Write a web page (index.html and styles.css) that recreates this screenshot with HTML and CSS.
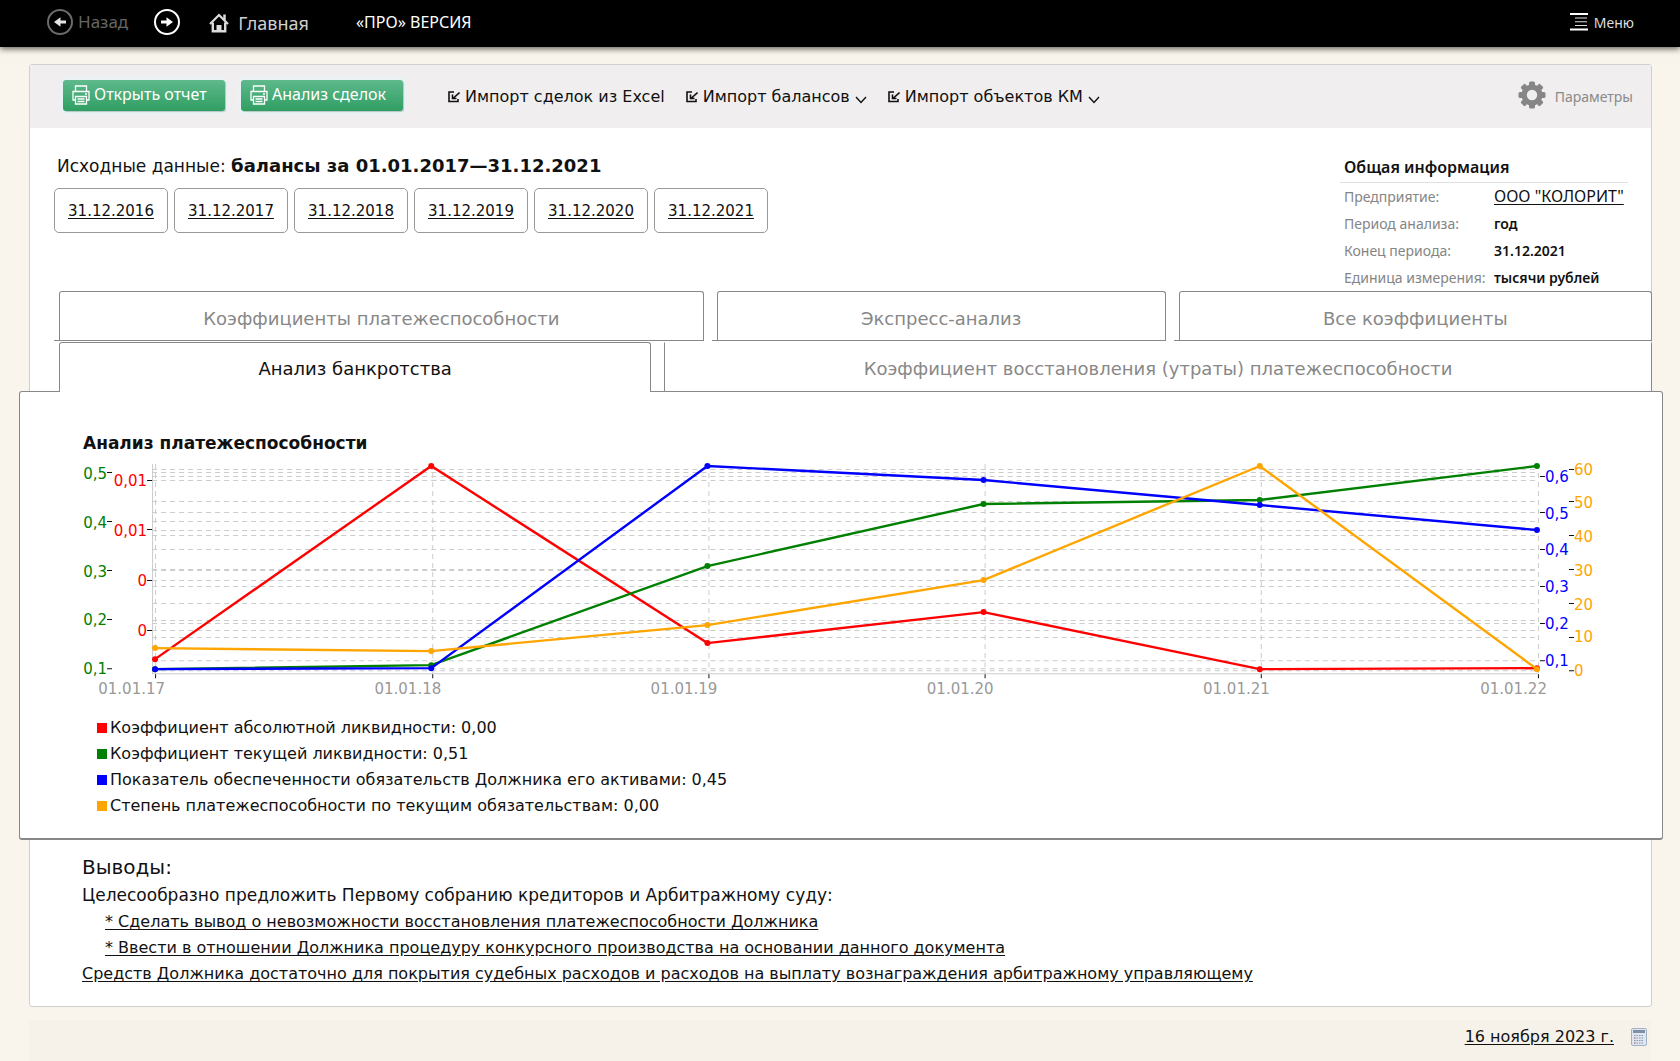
FILE: index.html
```html
<!DOCTYPE html>
<html lang="ru">
<head>
<meta charset="utf-8">
<title>Анализ банкротства</title>
<link rel="stylesheet" href="styles.css">
</head>
<body>
<header class="topbar">
  <nav class="topnav">
    <a class="nav-back" href="#">
      <svg width="26" height="26" viewBox="0 0 26 26"><circle cx="13" cy="13" r="12" fill="none" stroke="#6b6b6b" stroke-width="2"/><path d="M19 11.500h-5.500V8.200L7 13l6.500 4.800V14.500H19z" fill="#e4e4e4"/></svg>
      <span>Назад</span>
    </a>
    <a class="nav-next" href="#" aria-label="Вперёд">
      <svg width="26" height="26" viewBox="0 0 26 26"><circle cx="13" cy="13" r="12" fill="none" stroke="#fff" stroke-width="2"/><path d="M7 11.500h5.500V8.200L19 13l-6.500 4.800V14.500H7z" fill="#fff"/></svg>
    </a>
    <a class="nav-home" href="#">
      <svg width="20" height="20" viewBox="0 0 20 20" fill="none" stroke="#dcdcdc"><path d="M1 11L10 2l9 9" stroke-width="2.200"/><path d="M15.500 7V1.500" stroke-width="2.500"/><path d="M3.800 9.500v8.700h12.400V9.500" stroke-width="2.400"/><path d="M7.500 18v-6h5v6z" fill="#dcdcdc" stroke="none"/></svg>
      <span>Главная</span>
    </a>
    <a class="nav-pro" href="#">«ПРО» ВЕРСИЯ</a>
  </nav>
  <button class="menu" type="button">
    <svg width="18" height="18" viewBox="0 0 18 18" fill="#fff"><path d="M0 0h18v2H0zM0 15.500h18v2H0z"/><path d="M5 4.500h12v1H5zM5 8.200h12v1H5zM5 12h12v1H5z" fill="#ddd"/></svg>
    <span>Меню</span>
  </button>
</header>

<main class="card">
  <div class="toolbar">
    <button class="btn" type="button">
      <svg width="18" height="20" viewBox="0 0 18 20" fill="none" stroke="#fff" stroke-width="1.300"><path d="M3.500 6V1h11v5M3.500 15H1V6.500h16V15h-2.500M3.500 11.500h11V19h-11zM5.500 14h7M5.500 16.500h7M13 9h2"/></svg>
      <span>Открыть отчет</span>
    </button>
    <button class="btn" type="button">
      <svg width="18" height="20" viewBox="0 0 18 20" fill="none" stroke="#fff" stroke-width="1.300"><path d="M3.500 6V1h11v5M3.500 15H1V6.500h16V15h-2.500M3.500 11.500h11V19h-11zM5.500 14h7M5.500 16.500h7M13 9h2"/></svg>
      <span>Анализ сделок</span>
    </button>
    <div class="imports">
      <a href="#"><svg width="12" height="12" viewBox="0 0 12 12" fill="none" stroke="#111" stroke-width="1.600"><path d="M6 1H1v9.500h9V8M11.500 1.500L5.500 7M4.500 3.500v4h4"/></svg><span>Импорт сделок из Excel</span></a>
      <button type="button"><svg width="12" height="12" viewBox="0 0 12 12" fill="none" stroke="#111" stroke-width="1.600"><path d="M6 1H1v9.500h9V8M11.500 1.500L5.500 7M4.500 3.500v4h4"/></svg><span>Импорт балансов</span><svg class="chev" width="12" height="8" viewBox="0 0 12 8" fill="none" stroke="#111" stroke-width="1.400"><path d="M1 1l5 5.500L11 1"/></svg></button>
      <button type="button"><svg width="12" height="12" viewBox="0 0 12 12" fill="none" stroke="#111" stroke-width="1.600"><path d="M6 1H1v9.500h9V8M11.500 1.500L5.500 7M4.500 3.500v4h4"/></svg><span>Импорт объектов КМ</span><svg class="chev" width="12" height="8" viewBox="0 0 12 8" fill="none" stroke="#111" stroke-width="1.400"><path d="M1 1l5 5.500L11 1"/></svg></button>
    </div>
    <a class="settings" href="#">
      <svg width="28" height="28" viewBox="-14 -14 28 28"><g fill="#868686"><rect x="-3" y="-13.500" width="6" height="27" rx="1.500"/><rect x="-3" y="-13.500" width="6" height="27" rx="1.500" transform="rotate(45)"/><rect x="-3" y="-13.500" width="6" height="27" rx="1.500" transform="rotate(90)"/><rect x="-3" y="-13.500" width="6" height="27" rx="1.500" transform="rotate(135)"/><circle r="10.500"/></g><circle r="5.200" fill="#f0eeef"/></svg>
      <span>Параметры</span>
    </a>
  </div>

  <div class="summary">
    <section class="source">
      <p class="source-title">Исходные данные: <b>балансы за 01.01.2017—31.12.2021</b></p>
      <div class="dates">
        <a href="#">31.12.2016</a>
        <a href="#">31.12.2017</a>
        <a href="#">31.12.2018</a>
        <a href="#">31.12.2019</a>
        <a href="#">31.12.2020</a>
        <a href="#">31.12.2021</a>
      </div>
    </section>
    <section class="info">
      <h2>Общая информация</h2>
      <table>
        <tr><th scope="row">Предприятие:</th><td><a href="#">ООО "КОЛОРИТ"</a></td></tr>
        <tr><th scope="row">Период анализа:</th><td>год</td></tr>
        <tr><th scope="row">Конец периода:</th><td>31.12.2021</td></tr>
        <tr><th scope="row">Единица измерения:</th><td>тысячи рублей</td></tr>
      </table>
    </section>
  </div>

  <div class="tabs">
    <div class="tab-slot"><button type="button" class="tab">Коэффициенты платежеспособности</button></div>
    <div class="tab-slot"><button type="button" class="tab">Экспресс-анализ</button></div>
    <div class="tab-slot"><button type="button" class="tab">Все коэффициенты</button></div>
  </div>
  <div class="tabs tabs-front">
    <div class="tab-slot"><button type="button" class="tab tab-active">Анализ банкротства</button></div>
    <div class="tab-slot"><button type="button" class="tab tab-open">Коэффициент восстановления (утраты) платежеспособности</button></div>
  </div>

  <section class="panel">
    <h3>Анализ платежеспособности</h3>
    <svg class="chart" viewBox="83 458 1514 244" role="img" aria-label="Анализ платежеспособности">
      <g class="grid">
        <path d="M152 469.500H1537M152 472.500H1537M152 476.500H1537M152 480.500H1537M152 501.500H1537M152 512.500H1537M152 521.500H1537M152 530.500H1537M152 535.500H1537M152 549.500H1537M152 569.500H1537M152 570.500H1537M152 580.500H1537M152 586.500H1537M152 603.500H1537M152 620.500H1537M152 623.500H1537M152 630.500H1537M152 637.500H1537M152 660.500H1537M152 668.500H1537M152 670.500H1537"/>
        <path d="M155.500 464V673M432.500 464V673M708.500 464V673M984.500 464V673M1260.500 464V673M1537.500 464V673"/>
      </g>
      <path class="axis" d="M152.500 464V673.500H1537"/>
      <path class="ticks" d="M155.500 674v4M432.500 674v4M708.500 674v4M984.500 674v4M1260.500 674v4M1537.500 674v4M107 472.500h5M107 521.500h5M107 570.500h5M107 619.500h5M107 668.500h5M147 480.500h5M147 529.500h5M147 580.500h5M147 630.500h5M1539 476.500h5M1539 512.500h5M1539 549.500h5M1539 586.500h5M1539 623.500h5M1539 660.500h5M1568 469.500h5M1568 501.500h5M1568 535.500h5M1568 569.500h5M1568 603.500h5M1568 637.500h5M1568 670.500h5"/>
      <g class="label green">
        <text x="107" y="479">0,5</text><text x="107" y="528">0,4</text><text x="107" y="577">0,3</text><text x="107" y="625">0,2</text><text x="107" y="674">0,1</text>
      </g>
      <g class="label red">
        <text x="147" y="486">0,01</text><text x="147" y="536">0,01</text><text x="147" y="586">0</text><text x="147" y="636">0</text>
      </g>
      <g class="label blue">
        <text x="1544" y="482">0,6</text><text x="1544" y="519">0,5</text><text x="1544" y="555">0,4</text><text x="1544" y="592">0,3</text><text x="1544" y="629">0,2</text><text x="1544" y="666">0,1</text>
      </g>
      <g class="label orange">
        <text x="1573" y="475">60</text><text x="1573" y="508">50</text><text x="1573" y="542">40</text><text x="1573" y="576">30</text><text x="1573" y="610">20</text><text x="1573" y="642">10</text><text x="1573" y="676">0</text>
      </g>
      <g class="label date">
        <text x="165" y="694">01.01.17</text><text x="441" y="694">01.01.18</text><text x="717" y="694">01.01.19</text><text x="993" y="694">01.01.20</text><text x="1269" y="694">01.01.21</text><text x="1546" y="694">01.01.22</text>
      </g>
      <g class="series red"><polyline points="155,659 431,466 707,643 983,612 1259,669 1536,668"/><circle cx="155" cy="659" r="3"/><circle cx="431" cy="466" r="3"/><circle cx="707" cy="643" r="3"/><circle cx="983" cy="612" r="3"/><circle cx="1259" cy="669" r="3"/><circle cx="1536" cy="668" r="3"/></g>
      <g class="series green"><polyline points="155,669 431,665 707,566 983,504 1259,500 1536,466"/><circle cx="155" cy="669" r="3"/><circle cx="431" cy="665" r="3"/><circle cx="707" cy="566" r="3"/><circle cx="983" cy="504" r="3"/><circle cx="1259" cy="500" r="3"/><circle cx="1536" cy="466" r="3"/></g>
      <g class="series blue"><polyline points="155,669 431,668 707,466 983,480 1259,505 1536,530"/><circle cx="155" cy="669" r="3"/><circle cx="431" cy="668" r="3"/><circle cx="707" cy="466" r="3"/><circle cx="983" cy="480" r="3"/><circle cx="1259" cy="505" r="3"/><circle cx="1536" cy="530" r="3"/></g>
      <g class="series orange"><polyline points="155,648 431,651 707,625 983,580 1259,466 1536,669"/><circle cx="155" cy="648" r="3"/><circle cx="431" cy="651" r="3"/><circle cx="707" cy="625" r="3"/><circle cx="983" cy="580" r="3"/><circle cx="1259" cy="466" r="3"/><circle cx="1536" cy="669" r="3"/></g>
    </svg>
    <ul class="legend">
      <li class="red">Коэффициент абсолютной ликвидности: 0,00</li>
      <li class="green">Коэффициент текущей ликвидности: 0,51</li>
      <li class="blue">Показатель обеспеченности обязательств Должника его активами: 0,45</li>
      <li class="orange">Степень платежеспособности по текущим обязательствам: 0,00</li>
    </ul>
  </section>

  <section class="findings">
    <h3>Выводы:</h3>
    <p>Целесообразно предложить Первому собранию кредиторов и Арбитражному суду:</p>
    <ul>
      <li><a href="#">* Сделать вывод о невозможности восстановления платежеспособности Должника</a></li>
      <li><a href="#">* Ввести в отношении Должника процедуру конкурсного производства на основании данного документа</a></li>
    </ul>
    <a href="#">Средств Должника достаточно для покрытия судебных расходов и расходов на выплату вознаграждения арбитражному управляющему</a>
  </section>
</main>

<footer class="footer">
  <a href="#">16 ноября 2023 г.</a>
  <svg width="16" height="18" viewBox="0 0 16 18"><rect x=".5" y=".5" width="15" height="17" rx="1.500" fill="#dfe6ee" stroke="#a3b1c4"/><rect x="2" y="2" width="12" height="3" fill="#7d90a8"/><g stroke-width="1.200" stroke-dasharray="1.500 1"><path d="M3 7.500h10M3 10h10M3 12.500h10M3 15h10" stroke="#8796b8"/><path d="M3 10h2M3 15h2" stroke="#c77"/></g></svg>
</footer>
</body>
</html>
```
FILE: styles.css
```css
* {
  box-sizing: border-box;
}

body {
  margin: 0;
  background: #f9f5ec;
  color: #111;
  font: 16px/26px "DejaVu Sans", Verdana, sans-serif;
}

a {
  color: inherit;
  text-underline-offset: 2px;
}

button {
  border: 0;
  padding: 0;
  background: none;
  color: inherit;
  font: inherit;
  cursor: pointer;
}

h2, h3, p, ul {
  margin: 0;
  padding: 0;
}

ul {
  list-style: none;
}

svg {
  display: block;
  flex: none;
}

.topbar {
  display: flex;
  align-items: center;
  justify-content: space-between;
  height: 47px;
  padding: 0 46px 3px 47px;
  background: #000;
  box-shadow: 0 2px 6px rgba(0, 0, 0, .6);
}

.topnav {
  display: flex;
  align-items: center;
}

.topnav a, .menu {
  display: flex;
  align-items: center;
  text-decoration: none;
  font-family: "Noto Sans", sans-serif;
}

.nav-back {
  gap: 5px;
  margin-right: 26px;
  color: #666;
  font-size: 17px;
}

.nav-next {
  margin-right: 29px;
}

.nav-home {
  gap: 9px;
  margin-right: 47px;
  padding-top: 2px;
  color: #cfcfcf;
  font-size: 18px;
}

.nav-pro {
  color: #fff;
  font-size: 16px;
}

.menu {
  gap: 6px;
  color: #ddd;
  font-size: 14px;
}

.menu span {
  padding-top: 2px;
}

.card {
  margin: 17px 28px 0 29px;
  border: 1px solid #cfcfcf;
  border-radius: 3px;
  background: #fff;
}

.toolbar {
  display: flex;
  align-items: center;
  height: 63px;
  padding: 0 18px 3px 33px;
  background: #f0eeef;
}

.btn {
  display: flex;
  align-items: center;
  gap: 4px;
  width: 162px;
  height: 31px;
  margin-right: 16px;
  padding-left: 9px;
  border-radius: 3px;
  background: linear-gradient(#5fb98c, #2f9e62);
  box-shadow: 1px 1px 1px #b5c6c2, 0 0 3px 3px #e9f3f5;
  color: #fff;
  font: 16px/24px "Noto Sans", sans-serif;
}

.btn span {
  padding-bottom: 2px;
}

.imports {
  display: flex;
  flex: 1;
  gap: 21px;
  margin-left: 29px;
  padding-top: 4px;
}

.imports a, .imports button {
  display: flex;
  align-items: center;
  gap: 5px;
  text-decoration: none;
  white-space: nowrap;
}

.imports .chev {
  margin-top: 5px;
}

.settings {
  display: flex;
  align-items: center;
  gap: 9px;
  color: #8a8a8a;
  font: 14px/24px "Noto Sans", sans-serif;
  text-decoration: none;
}

.settings span {
  padding-top: 4px;
}

.summary {
  display: flex;
  justify-content: space-between;
  padding: 24px 23px 0 24px;
}

.source-title {
  padding-left: 3px;
  font-size: 17px;
  line-height: 28px;
}

.source-title b {
  font-size: 18px;
}

.dates {
  display: flex;
  gap: 6px;
  margin-top: 8px;
}

.dates a {
  display: flex;
  align-items: center;
  justify-content: center;
  width: 114px;
  height: 45px;
  border: 1px solid #999;
  border-radius: 5px;
  font-size: 15px;
}

.info {
  width: 288px;
  font: 14px/27px "Noto Sans", sans-serif;
}

.info h2 {
  padding-left: 4px;
  border-bottom: 1px solid #e2e2e2;
  font-size: 16px;
  font-weight: 600;
  line-height: 30px;
}

.info table {
  border-collapse: collapse;
}

.info th {
  width: 154px;
  padding: 0 0 0 4px;
  color: #858585;
  font-weight: 400;
  text-align: left;
}

.info td {
  padding: 0;
  font-weight: 600;
  white-space: nowrap;
}

.info td a {
  font-size: 16px;
  font-weight: 400;
}

.tabs {
  display: flex;
  gap: 8px;
  margin: 0 -1px 1px 0;
  padding-left: 24px;
}

.tab-slot {
  display: flex;
  flex: 1 1 auto;
  padding-left: 5px;
  border-bottom: 1px solid #888;
}

.tab {
  flex: 1;
  height: 49px;
  padding: 5px 0 0;
  border: 1px solid #888;
  border-bottom: 0;
  border-radius: 3px 3px 0 0;
  background: #fff;
  color: #888;
  font-size: 18px;
  line-height: 24px;
}

.tabs-front {
  margin-bottom: 0;
}

.tabs-front .tab-slot {
  border-bottom: 0;
}

.tabs-front .tab {
  padding-top: 3px;
}

.tab-open {
  border-top-color: transparent;
  border-radius: 0;
}

.tab-active {
  position: relative;
  height: 50px;
  margin-bottom: -1px;
  color: #111;
}

.panel {
  margin: 0 -12px 0 -11px;
  padding: 39px 64px 19px 63px;
  border: 1px solid #888;
  border-bottom-width: 2px;
  border-radius: 3px;
  background: #fff;
}

.panel h3 {
  margin-bottom: 3px;
  font-size: 17px;
  line-height: 24px;
}

.chart {
  width: 100%;
  height: auto;
}

.grid {
  stroke: #ccc;
  stroke-dasharray: 5 4;
}

.axis {
  fill: none;
  stroke: #ccc;
}

.ticks {
  stroke: #111;
}

.label {
  font-size: 15px;
  text-anchor: end;
}

.label.blue, .label.orange {
  text-anchor: start;
}

.red { --c: #f00; }
.green { --c: #008000; }
.blue { --c: #00f; }
.orange { --c: #ffa500; }
.date { --c: #999; }

.label, .series circle {
  fill: var(--c);
}

.series polyline {
  fill: none;
  stroke: var(--c);
  stroke-width: 2.4;
}

.legend {
  margin: 13px 0 0 14px;
}

.legend li {
  display: flex;
  align-items: center;
  gap: 3px;
}

.legend li::before {
  width: 10px;
  height: 10px;
  background: var(--c);
  content: "";
}

.findings {
  padding: 12px 52px 19px;
}

.findings h3 {
  font-size: 20px;
  font-weight: 400;
  line-height: 30px;
}

.findings p {
  font-size: 17px;
  line-height: 27px;
}

.findings ul {
  padding-left: 23px;
}

.footer {
  display: flex;
  align-items: center;
  justify-content: flex-end;
  gap: 17px;
  margin: 13px 29px 0;
  padding: 4px 4px 11px 0;
  background: #f6f2ea;
}
```
